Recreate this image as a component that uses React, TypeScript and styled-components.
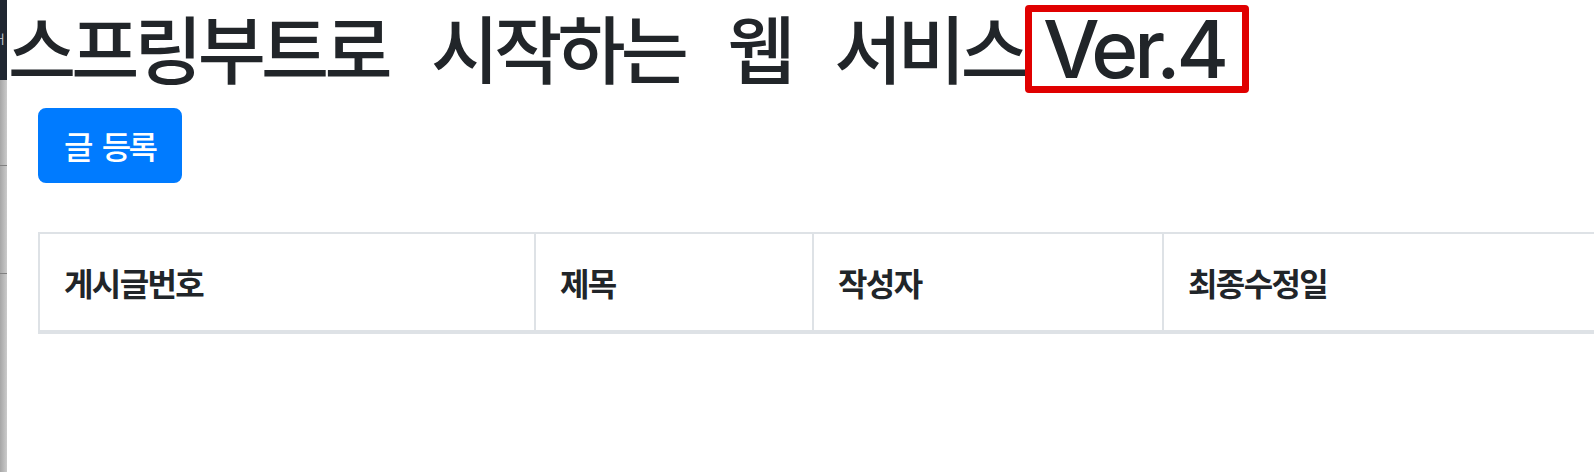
import React from "react";
import styled, { createGlobalStyle } from "styled-components";

const GlobalStyle = createGlobalStyle`
  html, body {
    margin: 0;
    padding: 0;
    background: #ffffff;
  }
  body {
    font-family: Inter, "Noto Sans CJK KR", sans-serif;
    color: #212529;
  }
`;

const Page = styled.div`
  display: flex;
  width: 100%;
  height: 472px;
  overflow: hidden;
`;

const EdgeStrip = styled.aside`
  width: 7px;
  flex-shrink: 0;
  display: flex;
  flex-direction: column;
  overflow: hidden;
`;

const EdgeTop = styled.div`
  height: 80px;
  background: #1f2631;
  display: flex;
  align-items: flex-start;
  overflow: hidden;
`;

const EdgeGlyph = styled.span`
  margin-top: 33px;
  margin-left: -4px;
  font-family: "Noto Sans CJK KR", sans-serif;
  font-size: 12px;
  line-height: 12px;
  color: #c8ccd2;
`;

const EdgeSegment = styled.div<{ $h: number }>`
  height: ${(p) => p.$h}px;
  flex-shrink: 0;
  background: linear-gradient(to right, #a6a6a6, #cbcbcb);
  border-bottom: 1px solid #808080;
  &:last-child {
    flex: 1;
    border-bottom: none;
  }
`;

const Main = styled.main`
  flex: 1;
  min-width: 0;
  overflow: hidden;
`;

const Title = styled.h1`
  margin: 5px 0 0 0;
  padding-left: 1px;
  font-size: 80px;
  font-weight: 500;
  line-height: 1;
  white-space: nowrap;
  color: #212529;
`;

const TitleKo = styled.span`
  font-family: "Noto Sans CJK KR", sans-serif;
  font-weight: 500;
  font-size: 74px;
  letter-spacing: -4.8px;
  word-spacing: 31.5px;
  vertical-align: baseline;
`;

const Highlight = styled.span`
  display: inline-block;
  margin-left: 1px;
  border: 7px solid #e00000;
  border-radius: 4px;
  padding: 0 17px 0 11px;
  line-height: 74px;
  font-family: Inter, "Liberation Sans", sans-serif;
  font-weight: 500;
  letter-spacing: -4px;
`;

const Container = styled.div`
  padding-left: 31px;
`;

const PrimaryButton = styled.button`
  display: inline-block;
  margin-top: 15px;
  padding: 12px 24px;
  border: 2px solid #007bff;
  border-radius: 8px;
  background: #007bff;
  color: #ffffff;
  font-family: "Noto Sans CJK KR", sans-serif;
  font-size: 32px;
  font-weight: 500;
  line-height: 47px;
  letter-spacing: -2.5px;
  word-spacing: 6px;
  cursor: pointer;
`;

const Table = styled.table`
  margin-top: 49px;
  width: 1700px;
  table-layout: fixed;
  border-collapse: separate;
  border-spacing: 0;
`;

const HeadCell = styled.th`
  padding: 24px;
  border-top: 2px solid #dee2e6;
  border-left: 2px solid #dee2e6;
  border-bottom: 4px solid #dee2e6;
  text-align: left;
  vertical-align: bottom;
  font-family: "Noto Sans CJK KR", sans-serif;
  font-size: 32px;
  font-weight: 700;
  line-height: 48px;
  letter-spacing: -1.6px;
  color: #212529;
  white-space: nowrap;
`;

const columns = [
  { label: "게시글번호", width: 496 },
  { label: "제목", width: 278 },
  { label: "작성자", width: 350 },
  { label: "최종수정일", width: 576 },
];

export default function App() {
  return (
    <>
      <GlobalStyle />
      <Page>
        <EdgeStrip>
          <EdgeTop>
            <EdgeGlyph>ㅓ</EdgeGlyph>
          </EdgeTop>
          <EdgeSegment $h={85} />
          <EdgeSegment $h={107} />
          <EdgeSegment $h={200} />
        </EdgeStrip>
        <Main>
          <Title>
            <TitleKo>스프링부트로 시작하는 웹 서비스</TitleKo>
            <Highlight>Ver.4</Highlight>
          </Title>
          <Container>
            <PrimaryButton type="button">글 등록</PrimaryButton>
            <Table>
              <colgroup>
                {columns.map((c) => (
                  <col key={c.label} style={{ width: c.width }} />
                ))}
              </colgroup>
              <thead>
                <tr>
                  {columns.map((c) => (
                    <HeadCell key={c.label}>{c.label}</HeadCell>
                  ))}
                </tr>
              </thead>
              <tbody />
            </Table>
          </Container>
        </Main>
      </Page>
    </>
  );
}
